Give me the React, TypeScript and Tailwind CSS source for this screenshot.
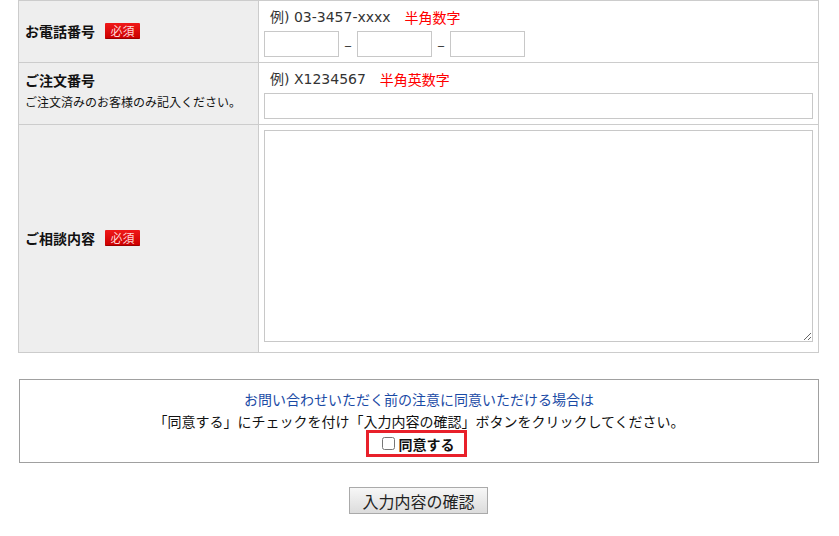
import React from "react";

function Required() {
    return (
        <span className="ml-[10px] inline-block h-[16px] w-[35px] rounded-[1px] border-b border-[#990000] bg-gradient-to-b from-[#f01818] to-[#cc0000] text-center text-[12px] leading-[16px] font-normal text-[#ffd6d6] align-[1px]">
            必須
        </span>
    );
}

export default function App() {
    const th = "w-[240px] border border-[#cccccc] bg-[#eeeeee] pl-[6px] text-left text-[14px] font-bold text-[#111]";
    const td = "border border-[#cccccc] bg-white px-[5px] text-[14px] text-[#333]";
    const input = "block h-[26px] border border-[#c8c8c8] bg-white outline-none";
    const latin = "font-['DejaVu_Sans','Noto_Sans_CJK_JP',sans-serif] text-[14px] leading-[24px]";

    return (
        <div className="min-h-[536px] bg-white font-['Noto_Sans_CJK_JP',sans-serif]">
            <div className="ml-[18px] w-[801px]">
                <table className="w-full border-collapse table-fixed">
                    <tbody>
                        {/* 電話番号 */}
                        <tr>
                            <th className={th + " h-[62px] align-middle"}>
                                お電話番号<Required />
                            </th>
                            <td className={td + " pt-[4px] pb-[4px] align-top"}>
                                <div className="flex h-[24px] items-center overflow-hidden pl-[6px]">
                                    <span className={latin}>例) 03-3457-xxxx</span>
                                    <span className="ml-[14px] leading-[24px] text-[#ff0000]">半角数字</span>
                                </div>
                                <div className="mt-[2px] flex items-center">
                                    <input className={input + " w-[75px]"} />
                                    <span className="w-[18px] text-center">–</span>
                                    <input className={input + " w-[75px]"} />
                                    <span className="w-[18px] text-center">–</span>
                                    <input className={input + " w-[75px]"} />
                                </div>
                            </td>
                        </tr>
                        {/* 注文番号 */}
                        <tr>
                            <th className={th + " h-[62px] pt-[6px] align-top"}>
                                <div className="leading-[22px]">ご注文番号</div>
                                <div className="text-[12px] font-normal leading-[22px]">ご注文済みのお客様のみ記入ください。</div>
                            </th>
                            <td className={td + " pt-[4px] pb-[4px] align-top"}>
                                <div className="flex h-[24px] items-center overflow-hidden pl-[6px]">
                                    <span className={latin}>例) X1234567</span>
                                    <span className="ml-[14px] leading-[24px] text-[#ff0000]">半角英数字</span>
                                </div>
                                <input className={input + " mt-[2px] w-full"} />
                            </td>
                        </tr>
                        {/* 相談内容 */}
                        <tr>
                            <th className={th + " align-middle"}>
                                ご相談内容<Required />
                            </th>
                            <td className={td + " pt-[5px] pb-[10px] align-top"}>
                                <textarea className="block h-[212px] w-full border border-[#c8c8c8] bg-white outline-none" />
                            </td>
                        </tr>
                    </tbody>
                </table>

                {/* 同意 */}
                <div className="mt-[26px] ml-[1px] w-[800px] border border-[#a0a0a0] pt-[8px] pb-[5px] text-center text-[14px] leading-[22px]">
                    <div className="text-[#1a4aa5]">お問い合わせいただく前の注意に同意いただける場合は</div>
                    <div className="text-[#111]">「同意する」にチェックを付け「入力内容の確認」ボタンをクリックしてください。</div>
                    <label className="-mt-[2px] mr-[6px] inline-flex h-[27px] w-[101px] items-center border-[3px] border-[#e8202a] pl-[13px]">
                        <input type="checkbox" className="m-0 mr-[4px] h-[13px] w-[13px]" />
                        <span className="text-[14px] font-bold text-[#111]">同意する</span>
                    </label>
                </div>

                <div className="mt-[24px] flex justify-center">
                    <button className="h-[27px] w-[139px] border border-[#aaaaaa] bg-gradient-to-b from-[#f7f7f7] to-[#dcdcdc] text-[16px] leading-[24px] text-[#222]">
                        入力内容の確認
                    </button>
                </div>
            </div>
        </div>
    );
}
